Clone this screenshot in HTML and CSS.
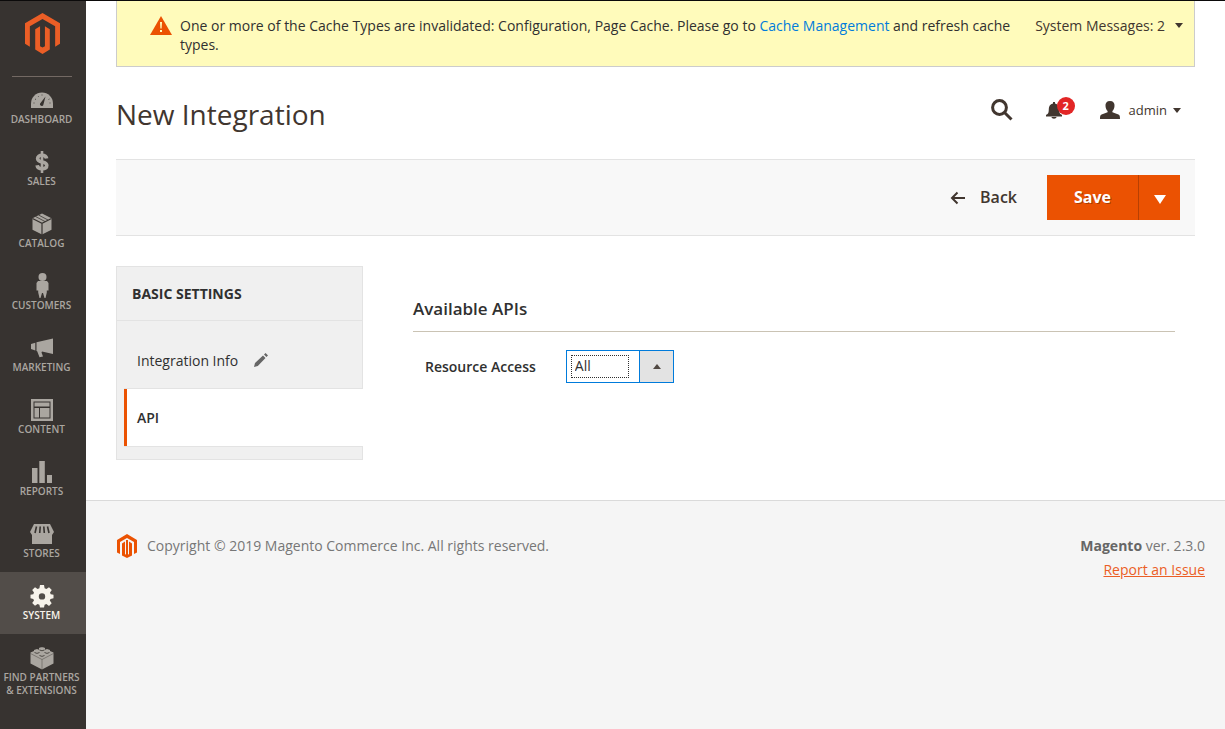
FILE: index.html
```html
<!DOCTYPE html>
<html lang="en">
<head>
<meta charset="utf-8">
<title>New Integration</title>
<link rel="stylesheet" href="styles.css">
</head>
<body>
<div class="page">
  <nav class="sidebar" aria-label="Main menu">
    <a class="brand" href="#" aria-label="Magento"><svg class="brand-logo" viewBox="0 0 36 42"><path d="M18 0 36 10.500V31.500L31 34.500V13.500L18 6 5 13.500V34.500L0 31.500V10.500Z"/><path d="M10.500 16.500 15.500 13.500V34L18 35.500 20.500 34V13.500L25.500 16.500V37.500L18 42 10.500 37.500Z"/></svg></a>
    <ul class="menu">
      <li><a class="menu-link" href="#"><svg viewBox="0 0 24 24"><path d="M1 20V15.500a11 11 0 0 1 22 0V20Z"/><path class="cut" d="m10.500 15 5-6.500-2 7.800a1.700 1.700 0 1 1-3-1.300Z"/><path class="cut-line thin" d="M3.500 15h1M5 11l1 .5M8 8l.6.7M12 6.500v1M18.500 11.500l1-.5M19.500 15h1"/></svg><span>Dashboard</span></a></li>
      <li><a class="menu-link" href="#"><svg viewBox="0 0 24 24"><path class="line dollar" d="M16.600 8.500C16.300 6.500 14.500 5.300 12 5.300c-2.600 0-4.400 1.200-4.400 3.100 0 4.800 9.200 2.300 9.200 6.900 0 2.100-1.800 3.400-4.800 3.400-2.800 0-4.600-1.400-4.900-3.500"/><path class="line" stroke-width="2.600" d="M12 1v22"/></svg><span>Sales</span></a></li>
      <li><a class="menu-link" href="#"><svg viewBox="0 0 24 24"><path d="m12 1.500 9.500 4.700v11.600L12 22.500l-9.500-4.700V6.200Z"/><path class="cut-line" d="m2.500 6.500 9.500 4.800 9.500-4.800M12 11.300V23"/><path class="cut-line thin" d="M5.500 4.500l9.500 5M8.500 3l9.500 5"/></svg><span>Catalog</span></a></li>
      <li><a class="menu-link" href="#"><svg class="tall" viewBox="0 0 24 28"><circle cx="12.500" cy="5" r="4"/><path d="M8 9h9l1.500 2v7.500h-1.700v2L15.500 26h-1l-1.500-5h-1l-1.500 5h-1l-1.300-5.500v-2H6.500V11Z"/></svg><span>Customers</span></a></li>
      <li><a class="menu-link" href="#"><svg viewBox="0 0 24 24"><path d="M6.500 6.300 23 2.500V18L12 15.500l-.5 1 1.500 4-3.500.8-2.300-6-.7-.3ZM5.300 6.800v7.700L1 13V8Z"/></svg><span>Marketing</span></a></li>
      <li><a class="menu-link" href="#"><svg viewBox="0 0 24 24"><path fill-rule="evenodd" d="M1 1h22v22H1Zm2.500 2.500v17h17v-17ZM4.500 4.500h15v4h-15Zm0 5.500h4.500v9.500H4.500Zm5.500 0h9.500v9.500H10Z"/></svg><span>Content</span></a></li>
      <li><a class="menu-link" href="#"><svg viewBox="0 0 24 24"><path d="M2 8h5.500v15H2ZM9.300 1h5.500v22H9.300ZM17 15h5v8h-5Z"/></svg><span>Reports</span></a></li>
      <li><a class="menu-link" href="#"><svg viewBox="0 0 24 24"><path d="M4 2h16l4 8-2 3v9H2v-9l-2-3Z"/><path class="cut-line awning" d="M6.500 4.500 5 11M10.200 4.500 9.700 11M13.800 4.500l.5 6.500M17.500 4.500 19 11"/></svg><span>Stores</span></a></li>
      <li><a class="menu-link active" href="#" aria-current="page"><svg viewBox="0 0 24 24"><path fill-rule="evenodd" d="M10 1h4l.6 3.200 1.800.8 2.600-1.800L21.800 6 20 8.600l.7 1.600 2.800.5v3.600l-3 .6-.7 1.500 1.900 2.800-2.700 2.700-2.600-1.800-1.800.7L14 23.500h-4l-.6-2.800-1.800-.7L5 21.800l-2.800-2.700L4 16.400l-.7-1.500-2.800-.6v-3.600l2.800-.5.7-1.600L2.200 6 5 3.200 7.600 5l1.800-.8ZM12 9.200a3.200 3.200 0 1 0 0 6.400 3.200 3.200 0 0 0 0-6.400Z"/></svg><span>System</span></a></li>
      <li><a class="menu-link" href="#"><svg viewBox="0 0 24 24"><path d="M.5 6.500 4 5V4l3-1 2 .7V2c1-1 5-1 6 0v1.700l2-.7 3 1v1l3.500 1.500v11L12 23.500.5 17.500Z"/><path class="cut-line hair" d="m.5 7.500 11.500 6 11.500-6M12 13.500v10"/><path class="cut-line thin" d="M4.500 6.500q2.500 1.800 5 0M9.500 4q2.500 1.500 5 0M14.500 6.500q2.500 1.800 5 0M9.500 9.500q2.500 1.800 5 0"/></svg><span>Find Partners<br>&amp; Extensions</span></a></li>
    </ul>
  </nav>

  <div class="main">
    <div class="content">
      <section class="notice">
        <svg class="warning" viewBox="0 0 22 19"><path d="M11 0 22 19H0Z"/><path class="mark" d="M10 6h2l-.4 6.500h-1.200ZM10 14h2v2h-2Z"/></svg>
        <p class="notice-text">One or more of the Cache Types are invalidated: Configuration, Page Cache. Please go to <a href="#">Cache Management</a> and refresh cache types.</p>
        <button class="messages" type="button">System Messages: 2<i class="caret"></i></button>
      </section>

      <header class="header">
        <h1>New Integration</h1>
        <div class="tools">
          <button type="button" aria-label="Search"><svg class="search" viewBox="0 0 22 22"><circle cx="8.500" cy="8.500" r="6.900"/><path d="m13.500 13.500 7 7"/></svg></button>
          <button class="bell" type="button" aria-label="Notifications"><svg viewBox="0 0 16 18"><path d="M7 1h2v1.500c3 .5 4.200 3 4.200 5.500 0 4 .8 5 2.800 6v1.500H0V14c2-1 2.800-2 2.800-6C2.800 5.500 4 3 7 2.500ZM5.500 16h5c0 2.300-5 2.300-5 0Z"/></svg><b class="badge">2</b></button>
          <button class="user" type="button"><svg viewBox="0 0 20 18"><path d="M10 0c3.300 0 4.800 2 4.500 5-.2 2.500-1 4-2.100 5v1.300l6 2.200c1.200.5 1.600 1.500 1.600 4.500H0c0-3 .4-4 1.600-4.500l6-2.200V10C6.500 9 5.700 7.500 5.500 5 5.200 2 6.700 0 10 0Z"/></svg>admin<i class="caret"></i></button>
        </div>
      </header>

      <div class="actions">
        <button class="back" type="button"><svg viewBox="0 0 16 14"><path d="M15 7H2M7.500 1.500 2 7l5.500 5.500"/></svg>Back</button>
        <div class="split">
          <button class="save" type="button">Save</button>
          <button class="save-more" type="button" aria-label="More save options"><i></i></button>
        </div>
      </div>

      <div class="columns">
        <aside class="tabs">
          <h2>Basic Settings</h2>
          <ul>
            <li><a class="tab" href="#">Integration Info<svg viewBox="0 0 14 14"><path d="m0 14 1-4 8-7.500L11.500 5 3.800 13ZM10 1.600 11.600 0 14 2.400 12.400 4Z"/></svg></a></li>
            <li><a class="tab current" href="#" aria-current="true">API</a></li>
          </ul>
        </aside>
        <form class="panel">
          <h2>Available APIs</h2>
          <div class="field">
            <label for="resource">Resource Access</label>
            <div class="select"><select id="resource"><option>All</option><option>Custom</option></select></div>
          </div>
        </form>
      </div>
    </div>

    <footer class="footer">
      <p class="copyright"><svg class="footer-logo" viewBox="0 0 20 24"><path d="M10 0 20 6V18.500L17 20V8L10 4 3 8v12L0 18.500V6Z"/><path d="M5 9.500 8 7.500V20l1 .8V6h2v14.800l1-.8V7.500l3 2v12L10 24l-5-2.500Z"/></svg>Copyright © 2019 Magento Commerce Inc. All rights reserved.</p>
      <div class="version"><p><strong>Magento</strong> ver. 2.3.0</p><a href="#">Report an Issue</a></div>
    </footer>
  </div>
</div>
</body>
</html>
```
FILE: styles.css
```css
* { box-sizing: border-box; }
body, h1, h2, p, ul { margin: 0; padding: 0; }
ul { list-style: none; }
body {
  background: #fff;
  color: #303030;
  font: 14px/19px "Open Sans", "Noto Sans", sans-serif;
}
button {
  margin: 0;
  padding: 0;
  border: 0;
  background: none;
  color: #41362f;
  font: inherit;
  cursor: pointer;
}
svg { display: block; flex: none; fill: currentColor; }
.page { display: flex; min-height: 100vh; border-top: 1px solid #0b0a0a; }

/* Sidebar */
.sidebar { flex: none; width: 86px; background: #373330; }
.brand { display: block; height: 75px; padding: 12px 0 0 25px; }
.brand-logo { width: 35px; height: 41px; color: #eb5e26; }
.menu::before { content: ""; display: block; width: 60px; height: 1px; margin: 0 0 -1px 12px; background: #736963; }
.menu-link {
  display: flex;
  flex-direction: column;
  align-items: center;
  gap: 1px;
  min-height: 62px;
  padding: 12px 3px 12px 0;
  color: #aaa6a0;
  font-size: 10px;
  font-weight: 600;
  line-height: 13px;
  text-align: center;
  text-decoration: none;
  text-transform: uppercase;
  white-space: nowrap;
}
.menu-link svg { width: 24px; height: 24px; }
.menu-link .tall { height: 28px; margin: -2px 0; }
.menu-link.active { background: #524d49; color: #f7f3eb; }
.cut { fill: #373330; }
.cut-line { fill: none; stroke: #373330; stroke-width: 1.2; }
.cut-line.thin { stroke-width: 0.8; }
.cut-line.hair { stroke-width: 0.4; }
.cut-line.awning { stroke-width: 1.6; }
.line { fill: none; stroke: currentColor; }
.dollar { stroke-width: 3.6; }

/* Main column */
.main { display: flex; flex: 1; flex-direction: column; min-width: 0; }
.content { padding: 0 30px 40px; }
.caret { display: inline-block; border: 4px solid transparent; border-top: 5px solid currentColor; border-bottom: 0; }

.notice {
  display: flex;
  padding: 15px 11px 12px 33px;
  border: 1px solid #ccc;
  border-top: 0;
  background: #fffbbb;
}
.warning { width: 22px; height: 19px; margin-right: 8px; color: #eb5202; }
.mark { fill: #fffbbb; }
.notice-text { flex: 1; padding-right: 12px; }
.notice-text a { color: #007bdb; font-weight: 500; text-decoration: none; }
.messages { display: flex; align-items: center; align-self: flex-start; gap: 10px; }

.header { display: flex; align-items: center; justify-content: space-between; height: 92px; padding-right: 14px; }
h1 { color: #41362f; font-size: 28px; font-weight: 400; line-height: 36px; padding-top: 2px; }
.tools { display: flex; align-items: center; padding-bottom: 6px; }
.search { width: 22px; height: 22px; fill: none; stroke: currentColor; stroke-width: 3; }
.bell { position: relative; margin-left: 33px; }
.bell svg { width: 16px; height: 18px; }
.badge {
  position: absolute;
  top: -4px;
  left: 11px;
  width: 18px;
  height: 18px;
  border-radius: 50%;
  background: #e22626;
  color: #fff;
  font-size: 11px;
  line-height: 18px;
}
.user { display: flex; align-items: center; gap: 9px; margin-left: 38px; font-size: 13px; }
.user svg { width: 20px; height: 18px; }
.user .caret { margin-left: -3px; }

.actions {
  display: flex;
  align-items: center;
  justify-content: flex-end;
  gap: 30px;
  padding: 15px;
  border: solid #e3e3e3;
  border-width: 1px 0;
  background: #f8f8f8;
  font-size: 16px;
  font-weight: 600;
}
.back { display: flex; align-items: center; gap: 14px; font-weight: 600; }
.back svg { width: 16px; height: 14px; fill: none; stroke: currentColor; stroke-width: 2; }
.split { display: flex; height: 45px; }
.split button { background: #eb5202; color: #fff; font-weight: 700; }
.save { width: 91px; text-shadow: 1px 1px 0 rgba(0, 0, 0, .3); }
.split .save-more { display: grid; place-items: center; width: 42px; border-left: 1px solid #b84002; }
.save-more i { border: 6px solid transparent; border-top: 9px solid #fff; border-bottom: 0; margin-top: 3px; }

.columns { display: flex; align-items: flex-start; gap: 50px; padding-top: 30px; }
.tabs { flex: none; width: 247px; padding-bottom: 12px; border: 1px solid #e3e3e3; background: #f0f0f0; }
.tabs h2 { padding: 17px 15px; border-bottom: 1px solid #e3e3e3; font-size: 14px; font-weight: 700; line-height: 19px; text-transform: uppercase; }
.tabs ul { padding-top: 10px; }
.tab {
  display: flex;
  align-items: center;
  gap: 16px;
  height: 58px;
  padding-left: 20px;
  color: #303030;
  text-decoration: none;
}
.tab svg { width: 14px; height: 14px; color: #666; }
.tab.current {
  height: 59px;
  margin: -1px -1px 0 7px;
  padding-left: 13px;
  border: solid #e3e3e3;
  border-width: 1px 0;
  background: #fff;
  box-shadow: inset 3px 0 #eb5202;
  font-weight: 600;
}

.panel { flex: 1; min-width: 0; padding: 31px 20px 0 0; }
.panel h2 { padding-bottom: 10px; border-bottom: 1px solid #cac3b4; font-size: 17px; font-weight: 600; line-height: 24px; }
.field { display: flex; align-items: center; gap: 30px; margin-top: 18px; padding-left: 12px; }
.field label { font-weight: 600; }
.select { position: relative; }
.select select {
  display: block;
  width: 108px;
  height: 33px;
  padding: 0 0 2px 8px;
  border: 1px solid #007bdb;
  border-radius: 0;
  outline: 0;
  background: linear-gradient(90deg, #007bdb 1px, #e3e3e3 1px) right / 34px 100% no-repeat #fff;
  color: #303030;
  font: inherit;
  appearance: none;
}
.select::before, .select::after { content: ""; position: absolute; pointer-events: none; }
.select::before { inset: 5px 45px 5px 5px; border: 1px dotted #303030; }
.select::after { top: 14px; right: 13px; border: 4px solid transparent; border-top: 0; border-bottom: 5px solid #514943; }

.footer {
  display: flex;
  flex: 1;
  align-items: flex-start;
  justify-content: space-between;
  padding: 33px 20px 0 31px;
  border-top: 1px solid #dadada;
  background: #f5f5f5;
  color: #777;
  line-height: 24px;
}
.copyright { display: flex; align-items: center; gap: 10px; }
.footer-logo { width: 20px; height: 24px; color: #eb5202; }
.version { text-align: right; }
.version strong { color: #666; }
.version a { color: #eb5e26; }
```
